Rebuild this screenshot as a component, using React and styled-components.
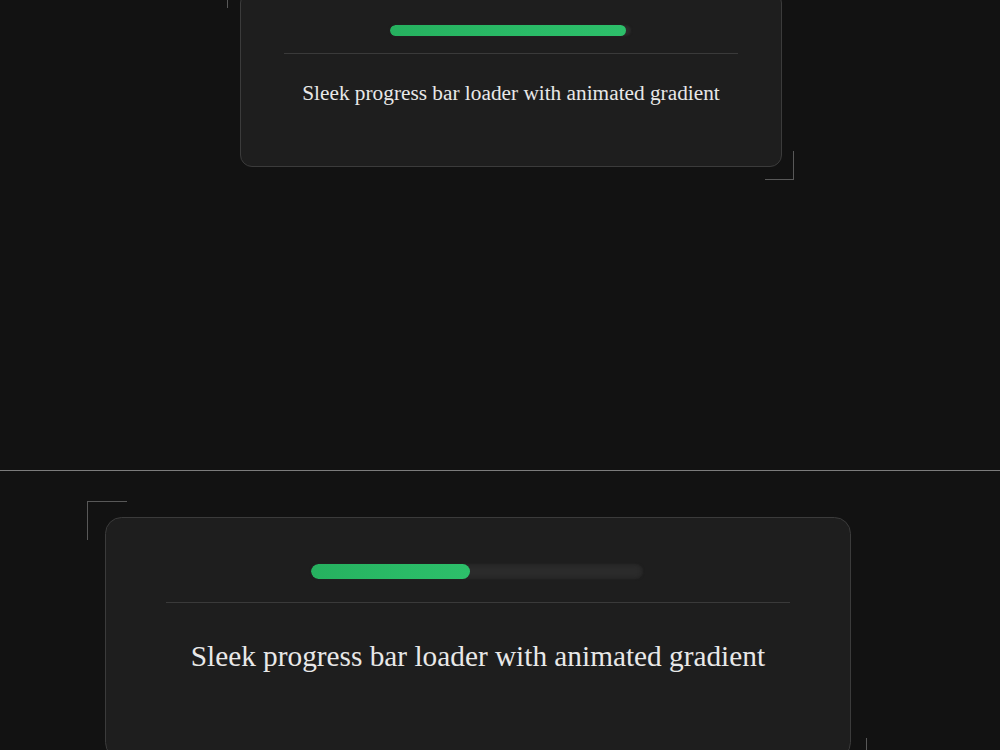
import React from 'react'
import styled, { createGlobalStyle } from 'styled-components'

const GlobalStyle = createGlobalStyle`
  html, body {
    margin: 0;
    padding: 0;
    background: #121212;
    overflow: hidden;
  }
  body {
    font-family: "Liberation Serif", "Times New Roman", serif;
  }
`

const Page = styled.main`
  display: flex;
  flex-direction: column;
  width: 1000px;
  height: 750px;
  overflow: hidden;
`

const Section = styled.section`
  display: flex;
  align-items: flex-start;
  height: ${p => p.height}px;
  padding-top: ${p => p.top}px;
  padding-left: ${p => p.left}px;
  box-sizing: border-box;
  flex-shrink: 0;
`

const Rule = styled.hr`
  margin: 0;
  border: 0;
  height: 1px;
  background: #7c7c7c;
  flex-shrink: 0;
`

const Frame = styled.div`
  position: relative;
  flex-shrink: 0;
  margin-top: ${p => p.offset || 0}px;
`

const Bracket = styled.span`
  position: absolute;
  width: ${p => p.s * 28}px;
  height: ${p => p.s * 28}px;
  border-color: #585858;
  border-style: solid;
  border-width: 0;
  ${p => p.corner === 'tl'
    ? `left: ${-13 * p.s}px; top: ${-12 * p.s}px; border-left-width: 1.5px; border-top-width: 1.5px;`
    : `right: ${-12 * p.s}px; bottom: ${-13 * p.s}px; border-right-width: 1.5px; border-bottom-width: 1.5px;`}
`

const CardBox = styled.article`
  box-sizing: border-box;
  width: ${p => p.s * 542}px;
  height: ${p => p.s * 176}px;
  background: #1e1e1e;
  border: 1px solid #3b3b3b;
  border-radius: ${p => p.s * 12}px;
  display: flex;
  flex-direction: column;
  align-items: center;
  padding: ${p => p.s * 34 - 1}px ${p => p.s * 44 - 1}px 0;
`

const Track = styled.div`
  width: ${p => p.s * 241}px;
  height: ${p => p.s * 11}px;
  margin-left: -2px;
  border-radius: ${p => p.s * 6}px;
  background: #2b2b2b;
  box-shadow: inset 0 0 ${p => p.s * 3}px #1e1e1e, 0 0 2px #262626;
  overflow: hidden;
`

const Fill = styled.div`
  height: 100%;
  border-radius: inherit;
  background: linear-gradient(90deg, #26b15f, #2abb67 60%, #2dbf6a);
`

const Divider = styled.div`
  align-self: stretch;
  height: 1px;
  background: #3a3a3a;
  margin-top: ${p => p.s * 17}px;
`

const Caption = styled.p`
  margin: ${p => p.s * 27}px 0 0;
  font-size: ${p => p.s * 21.3}px;
  line-height: ${p => p.s * 24}px;
  color: #e8e8e8;
  text-align: center;
  white-space: nowrap;
`

const LoaderCard = ({ s = 1, progress = 50, offset = 0 }) => (
  <Frame offset={offset}>
    <Bracket corner="tl" s={s} />
    <CardBox s={s}>
      <Track s={s}>
        <Fill style={{ width: `${progress}%` }} />
      </Track>
      <Divider s={s} />
      <Caption s={s}>Sleek progress bar loader with animated gradient</Caption>
    </CardBox>
    <Bracket corner="br" s={s} />
  </Frame>
)

export default function App() {
  return (
    <>
      <GlobalStyle />
      <Page>
        <Section height={470} top={0} left={240}>
          <LoaderCard s={1} progress={98} offset={-9} />
        </Section>
        <Rule />
        <Section height={279} top={46} left={105}>
          <LoaderCard s={1.376} progress={48} />
        </Section>
      </Page>
    </>
  )
}
